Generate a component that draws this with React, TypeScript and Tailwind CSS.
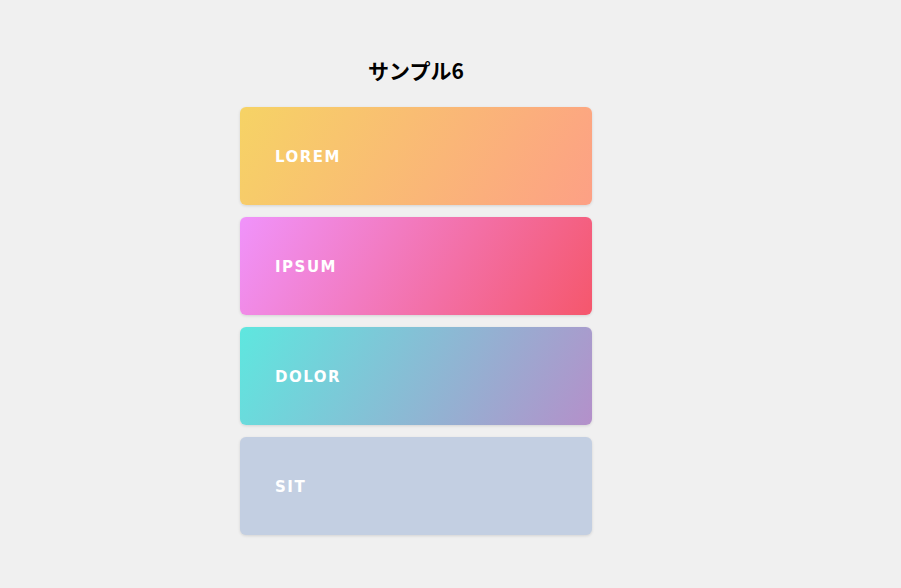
import React from 'react';

const cards = [
  { label: 'Lorem', bg: 'bg-linear-[120deg] from-[#f6d365] to-[#fda085]' },
  { label: 'Ipsum', bg: 'bg-linear-[120deg] from-[#f093fb] to-[#f5576c]' },
  { label: 'Dolor', bg: 'bg-linear-[120deg] from-[#5ee7df] to-[#b490ca]' },
  { label: 'Sit', bg: 'bg-[#c3cfe2]' },
];

export default function App() {
  return (
    <div className="min-h-[588px] bg-[#f0f0f0] pl-[240px] pt-[56px] font-['DejaVu_Sans','Noto_Sans_CJK_JP',sans-serif]">
      <div className="w-[352px]">
        <h2 className="mb-[23px] text-center text-[21px] leading-[28px] font-bold text-black font-['Noto_Sans_CJK_JP',sans-serif]">
          サンプル6
        </h2>
        <div className="flex flex-col gap-3">
          {cards.map((card) => (
            <div
              key={card.label}
              className={`flex h-[98px] items-center rounded-md pt-[2px] pl-[35px] shadow-[0_1px_3px_rgba(0,0,0,0.12)] ${card.bg}`}
            >
              <span className="text-[15px] font-bold tracking-[0.1em] text-white uppercase">
                {card.label}
              </span>
            </div>
          ))}
        </div>
      </div>
    </div>
  );
}
